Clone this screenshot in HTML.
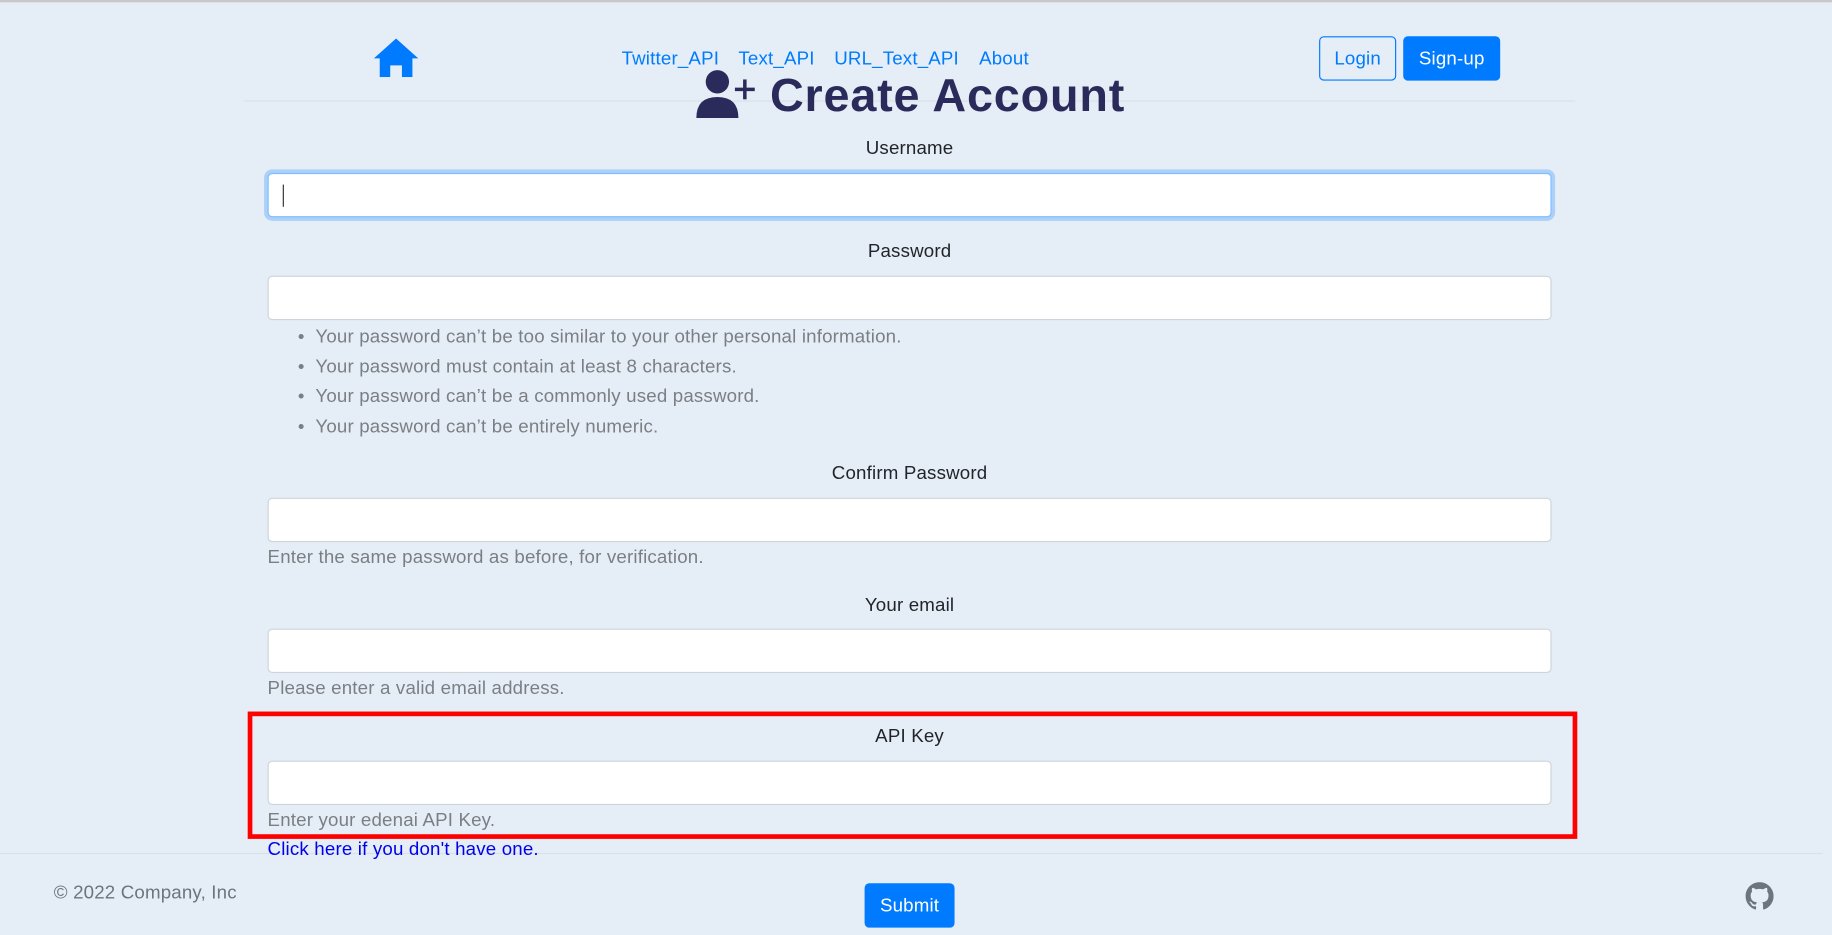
<!DOCTYPE html>
<html><head><meta charset="utf-8"><style>
html,body{margin:0;padding:0;width:1832px;height:935px;overflow:hidden;background:#e5eef6;}
#w{position:absolute;left:0;top:0;width:1568px;height:800px;transform:scale(1.16837);transform-origin:0 0;font-family:"Liberation Sans",sans-serif;font-size:16px;color:#212529;letter-spacing:0.15px;}
.a{position:absolute;white-space:nowrap;}
.lbl{position:absolute;left:229px;width:1099px;text-align:center;line-height:20px;}
.inp{position:absolute;left:229px;width:1097px;height:36px;background:#fff;border:1px solid #ced4da;border-radius:4px;}
.help{position:absolute;left:229px;color:#7b7f84;line-height:20px;}
.nav a{color:#007bff;text-decoration:none;position:absolute;top:41px;line-height:20px;}
</style></head><body><div id="w">
<div class="a" style="left:0;top:0;width:1568px;height:2px;background:#c8c8c8"></div>
<div class="a" style="left:209px;top:86px;width:1139px;height:1px;background:#d9e0e7"></div>
<svg class="a" style="left:319px;top:32px" width="40" height="34" viewBox="0 0 40 34"><path d="M20 1 L39 18 L34 18 L34 34 L25 34 L25 24 L15 24 L15 34 L6 34 L6 18 L1 18 Z" fill="#007bff"/></svg>
<div class="nav"><a style="left:532px">Twitter_API</a><a style="left:632px">Text_API</a><a style="left:714px">URL_Text_API</a><a style="left:838px">About</a></div>
<div class="a" style="left:1129px;top:31px;width:64px;height:36px;border:1px solid #007bff;border-radius:4px;color:#007bff;text-align:center;line-height:38px">Login</div>
<div class="a" style="left:1201px;top:31px;width:83px;height:38px;background:#007bff;border-radius:4px;color:#fff;text-align:center;line-height:39px">Sign-up</div>
<svg class="a" style="left:595px;top:59px" width="54" height="42" viewBox="0 0 54 42"><circle cx="19" cy="11" r="10" fill="#2a2b5b"/><path d="M1 42 Q1 24 19 24 Q37 24 37 42 Z" fill="#2a2b5b"/><rect x="34" y="16" width="17" height="3" fill="#2a2b5b"/><rect x="41" y="9" width="3" height="17" fill="#2a2b5b"/></svg>
<div class="a" style="left:659px;top:58px;font-size:40px;font-weight:bold;color:#2a2b5b;line-height:48px;letter-spacing:0.7px">Create Account</div>
<div class="lbl" style="top:118px">Username</div>
<div class="inp" style="top:148px;border-color:#80bdff;box-shadow:0 0 0 3px rgba(0,123,255,.25)"><div style="position:absolute;left:12px;top:9px;width:1px;height:19px;background:#333"></div></div>
<div class="lbl" style="top:206px">Password</div>
<div class="inp" style="top:236px"></div>
<div class="help" style="top:276px;left:255px;line-height:25.5px">
<div>• &nbsp;Your password can’t be too similar to your other personal information.</div>
<div>• &nbsp;Your password must contain at least 8 characters.</div>
<div>• &nbsp;Your password can’t be a commonly used password.</div>
<div>• &nbsp;Your password can’t be entirely numeric.</div></div>
<div class="lbl" style="top:396px">Confirm Password</div>
<div class="inp" style="top:426px"></div>
<div class="help" style="top:468px">Enter the same password as before, for verification.</div>
<div class="lbl" style="top:509px">Your email</div>
<div class="inp" style="top:538px"></div>
<div class="help" style="top:580px">Please enter a valid email address.</div>
<div class="a" style="left:212px;top:609px;width:1130px;height:101px;border:4px solid #ff0000"></div>
<div class="lbl" style="top:621px">API Key</div>
<div class="inp" style="top:651px"></div>
<div class="help" style="top:693px">Enter your edenai API Key.</div>
<div class="a" style="left:0;top:730px;width:1560px;height:1px;background:#d9e0e7"></div>
<div class="a" style="left:229px;top:718px;color:#0000ee;line-height:20px">Click here if you don't have one.</div>
<div class="a" style="left:46px;top:755px;color:#6c757d;line-height:20px">© 2022 Company, Inc</div>
<div class="a" style="left:740px;top:756px;width:77px;height:38px;background:#007bff;border-radius:4px;color:#fff;text-align:center;line-height:39px">Submit</div>
<svg class="a" style="left:1494px;top:755px" width="24" height="24" viewBox="0 0 16 16"><path fill="#6c757d" d="M8 0C3.580 0 0 3.58 0 8c0 3.54 2.29 6.53 5.470 7.59.4.07.55-.17.55-.38 0-.19-.01-.82-.01-1.49-2.01.37-2.53-.49-2.69-.94-.09-.23-.48-.94-.82-1.130-.28-.15-.68-.52-.01-.53.63-.01 1.08.58 1.23.82.72 1.21 1.87.87 2.33.66.07-.52.28-.87.51-1.07-1.78-.2-3.64-.89-3.64-3.95 0-.87.31-1.59.82-2.15-.08-.2-.36-1.02.08-2.12 0 0 .67-.21 2.2.82.64-.18 1.32-.27 2-.27.68 0 1.36.09 2 .27 1.53-1.04 2.2-.82 2.2-.82.44 1.1.16 1.92.08 2.12.51.56.82 1.27.82 2.15 0 3.07-1.87 3.75-3.65 3.95.29.25.54.73.54 1.48 0 1.07-.01 1.930-.01 2.2 0 .21.15.46.55.38A8.013 8.013 0 0016 8c0-4.42-3.58-8-8-8z"/></svg>
</div></body></html>
